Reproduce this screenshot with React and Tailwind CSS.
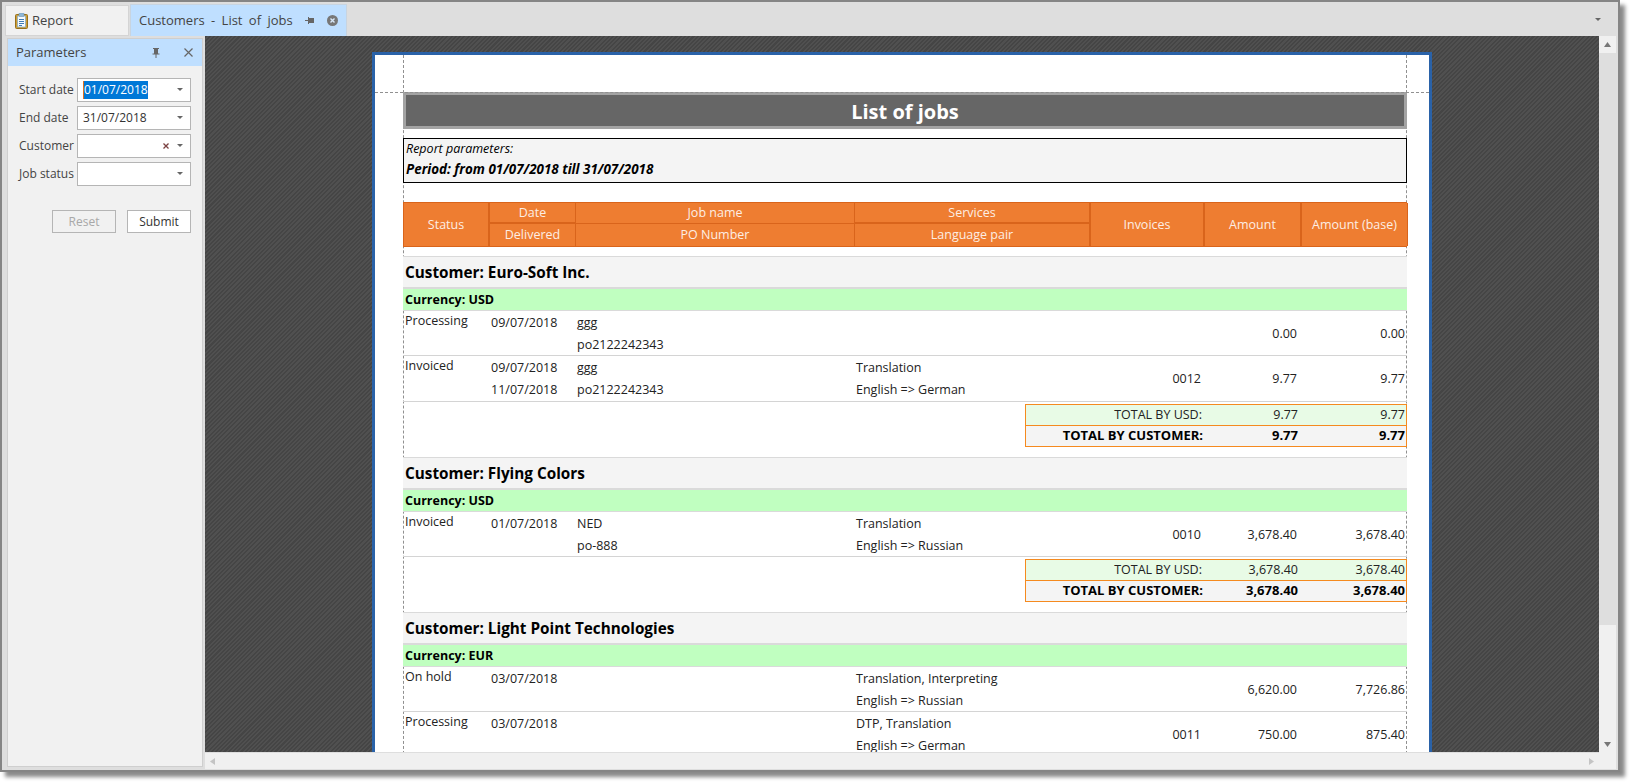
const F = { fontFamily: '"Open Sans", sans-serif' };

function ClipIcon() {
  return (
    <svg width="13" height="16" viewBox="0 0 13 16">
      <rect x="0.5" y="1.5" width="12" height="14" rx="1" fill="#cf9d33" stroke="#96701c" />
      <rect x="2.5" y="3" width="8" height="11" fill="#f6fafd" stroke="#7fa8c8" strokeWidth="0.7" />
      <rect x="4" y="0" width="5" height="3.5" rx="0.5" fill="#8fb8d8" stroke="#6f90aa" strokeWidth="0.5" />
      <path d="M4 6.5h5M4 8.5h5M4 10.5h5M4 12.5h3" stroke="#3f7cb5" strokeWidth="1" />
    </svg>
  );
}
function PinH() {
  return (
    <svg width="9" height="7" viewBox="0 0 9 7"><path d="M0 3.5h3" stroke="#666" /><rect x="3" y="0" width="1" height="7" fill="#666" /><rect x="4" y="1" width="5" height="5" fill="#666" /></svg>
  );
}
function PinV() {
  return (
    <svg width="8" height="10" viewBox="0 0 8 10"><path d="M1 0.5h6M0.5 6h7M4 6v4" stroke="#666" fill="none" /><rect x="2" y="1" width="4" height="5" fill="#666" /></svg>
  );
}
function Caret({ c = "#666" }) {
  return <svg width="6" height="3" viewBox="0 0 6 3"><path d="M0 0h6L3 3z" fill={c} /></svg>;
}
function Field({ label, value, selected, clear }) {
  return (
    <div className="flex items-center h-[23px] mb-[5px]">
      <div className="w-[58px] text-[12px] text-[#444] whitespace-nowrap">{label}</div>
      <div className="w-[114px] h-[24px] border border-[#b5b5b5] bg-white flex items-center pl-[5px] pr-[7px] text-[12px] text-[#333]">
        <span className={selected ? "bg-[#0078d7] text-white border-l border-[#e07020]" : ""}>{value}</span>
        <span className="flex-1" />
        {clear && (
          <svg className="mr-[8px]" width="6" height="6" viewBox="0 0 6 6"><path d="M0.5 0.5l5 5M5.5 0.5l-5 5" stroke="#7a4040" strokeWidth="1.3" /></svg>
        )}
        <Caret />
      </div>
    </div>
  );
}

const COLS = "grid grid-cols-[87px_86px_279px_236px_114px_97px_106px]";
const HCELL = "flex items-center justify-center border-[#d9641b] text-[12.5px] text-[#fdeee4]";

function Head() {
  return (
    <div className={`${COLS} grid-rows-[21px_22px] h-[45px] bg-[#ee7d31] border-y border-[#d9641b] mt-[19px]`}>
      <div className={`${HCELL} row-span-2 border-r-2 border-l pt-[1px]`}>Status</div>
      <div className={`${HCELL} border-r border-b-2 pt-[1px]`}>Date</div>
      <div className={`${HCELL} border-b border-r pt-[1px]`}>Job name</div>
      <div className={`${HCELL} border-b-2 border-r-2 pt-[1px]`}>Services</div>
      <div className={`${HCELL} row-span-2 border-r-2 pt-[1px]`}>Invoices</div>
      <div className={`${HCELL} row-span-2 border-r-2 pt-[1px]`}>Amount</div>
      <div className={`${HCELL} row-span-2 border-r pt-[1px]`}>Amount (base)</div>
      <div className={`${HCELL} border-r`}>Delivered</div>
      <div className={`${HCELL} border-r`}>PO Number</div>
      <div className={`${HCELL} border-r-2`}>Language pair</div>
    </div>
  );
}
function Row({ status, d1, d2, a, b, s, l, inv, am, base, tall }) {
  const c1 = "h-[24px] flex items-center pl-[1px] whitespace-nowrap";
  const c2 = "h-[21px] flex items-center pl-[1px] whitespace-nowrap";
  return (
    <div className={`${COLS} ${tall ? "h-[46px]" : "h-[45px]"} border-b border-[#d4d4d4] text-[12.5px] text-[#222] shrink-0`}>
      <div className="pl-[2px] pt-[1px] leading-[18px]">{status}</div>
      <div><div className={c1}>{d1}</div><div className={c2}>{d2}</div></div>
      <div><div className={c1}>{a}</div><div className={c2}>{b}</div></div>
      <div><div className={c1}>{s}</div><div className={c2}>{l}</div></div>
      <div className="flex items-center justify-end pr-[4px] pt-[1px]">{inv}</div>
      <div className="flex items-center justify-end pr-[5px] pt-[1px]">{am}</div>
      <div className="flex items-center justify-end pr-[3px] pt-[1px]">{base}</div>
    </div>
  );
}
function Group({ name, cur, rows, total, first }) {
  return (
    <div>
      <div className={`${first ? "mt-[9px]" : "mt-[10px]"} h-[33px] pt-[1px] bg-[#f4f4f4] border-t border-b-2 border-[#dadada] flex items-center pl-[2px] text-[15.3px] font-bold text-black`}>Customer: {name}</div>
      <div className="h-[22px] pt-[1px] bg-[#c0ffc0] border-b border-[#dadada] flex items-center pl-[2px] text-[12.5px] font-bold text-black">Currency: {cur}</div>
      {rows.map((r, i) => <Row key={i} {...r} />)}
      {total && (
        <div className="ml-[622px] mt-[2px] h-[43px] border border-[#f58a1f] text-[12.5px] text-[#222]">
          <div className="grid grid-cols-[178px_97px_106px] h-[21px] bg-[#e8fbe6] border-b border-[#f58a1f] items-center text-right">
            <div className="pr-[2px]">TOTAL BY {cur}:</div><div className="pr-[3px]">{total}</div><div className="pr-[2px]">{total}</div>
          </div>
          <div className="grid grid-cols-[178px_97px_106px] h-[20px] bg-[#f4f4f4] items-center text-right font-bold text-[13px] text-black">
            <div className="pr-[1px] whitespace-nowrap">TOTAL BY CUSTOMER:</div><div className="pr-[3px]">{total}</div><div className="pr-[2px]">{total}</div>
          </div>
        </div>
      )}
    </div>
  );
}

export default function App() {
  return (
    <div style={F} className="w-[1630px] h-[783px] bg-white overflow-hidden">
      <div className="w-[1620px] h-[772px] border-2 border-[#858585] shadow-[5px_5px_4px_#8a8a8a] bg-[#dedede] flex flex-col">
        <div className="h-[34px] flex items-end pl-[3px] shrink-0">
          <div className="w-[124px] h-[31px] bg-[#f1f1f1] border border-[#d4d4d4] flex items-center pl-[9px] gap-[4px] text-[13px] text-[#444]">
            <ClipIcon /><span>Report</span>
          </div>
          <div className="ml-[1px] w-[217px] h-[32px] bg-[#bfdfff] border border-[#c8d4e0] border-b-0 flex items-center pl-[8px] text-[13px] text-[#444]">
            <span className="[word-spacing:3px] whitespace-nowrap">Customers - List of jobs</span>
            <span className="ml-[12px] flex"><PinH /></span>
            <svg className="ml-[13px]" width="11" height="11" viewBox="0 0 11 11"><circle cx="5.5" cy="5.5" r="5.5" fill="#777" /><path d="M3.5 3.5l4 4M7.5 3.5l-4 4" stroke="#d8e8f8" strokeWidth="1.4" /></svg>
          </div>
          <div className="flex-1 self-center flex justify-end pr-[17px]"><Caret /></div>
        </div>
        <div className="flex-1 flex min-h-0">
          <div className="w-[203px] shrink-0 pl-[5px] pr-[2px] pt-[2px] pb-[3px]">
            <div className="h-full bg-[#f1f1f1] border border-[#cfcfcf]">
              <div className="h-[27px] bg-[#bfdfff] flex items-center pl-[8px] pr-[9px] text-[13px] text-[#444]">
                <span className="flex-1">Parameters</span>
                <PinV />
                <svg className="ml-[24px]" width="9" height="9" viewBox="0 0 9 9"><path d="M0.5 0.5l8 8M8.5 0.5l-8 8" stroke="#666" strokeWidth="1.2" /></svg>
              </div>
              <div className="pt-[12px] pl-[11px]">
                <Field label="Start date" value="01/07/2018" selected />
                <Field label="End date" value="31/07/2018" />
                <Field label="Customer" value="" clear />
                <Field label="Job status" value="" />
                <div className="flex gap-[11px] mt-[25px] pl-[33px]">
                  <div className="w-[64px] h-[23px] border border-[#b5b5b5] flex items-center justify-center text-[12px] text-[#a8a8a8]">Reset</div>
                  <div className="w-[64px] h-[23px] border border-[#b5b5b5] bg-white flex items-center justify-center text-[12px] text-[#333]">Submit</div>
                </div>
              </div>
            </div>
          </div>
          <div className="flex-1 flex flex-col min-w-0">
            <div className="flex-1 flex min-h-0">
              <div className="w-[1394px] h-[716px] overflow-hidden pt-[16px] pl-[167px] bg-[#4a4a4a] bg-[repeating-linear-gradient(135deg,#454545_0px,#454545_1.5px,#505050_1.5px,#505050_3px)]">
                <div className="relative w-[1060px] h-[720px] bg-white border-[3px] border-[#2a62a8] pl-[28px] pr-[22px]">
                  <div className="absolute left-[28px] top-0 bottom-0 border-l border-dashed border-[#909090]" />
                  <div className="absolute right-[22px] top-0 bottom-0 border-l border-dashed border-[#909090]" />
                  <div className="absolute left-0 right-0 top-[37px] border-t border-dashed border-[#909090] z-10" />
                  <div className="pt-[37px] relative">
                    <div className="h-[37px] pt-[2px] bg-[#666] border-[3px] border-[#a3a3a3] flex items-center justify-center text-[20px] font-bold text-white">List of jobs</div>
                    <div className="mt-[9px] h-[45px] bg-[#f4f4f4] border border-black pl-[2px] text-black italic">
                      <div className="h-[20px] flex items-center text-[12.5px]">Report parameters:</div>
                      <div className="h-[21px] flex items-center font-bold text-[13.4px]">Period: from 01/07/2018 till 31/07/2018</div>
                    </div>
                    <Head />
                    <Group first name="Euro-Soft Inc." cur="USD" total="9.77" rows={[
                      { status: "Processing", d1: "09/07/2018", a: "ggg", b: "po2122242343", am: "0.00", base: "0.00" },
                      { tall: true, status: "Invoiced", d1: "09/07/2018", d2: "11/07/2018", a: "ggg", b: "po2122242343", s: "Translation", l: "English => German", inv: "0012", am: "9.77", base: "9.77" },
                    ]} />
                    <Group name="Flying Colors" cur="USD" total="3,678.40" rows={[
                      { status: "Invoiced", d1: "01/07/2018", a: "NED", b: "po-888", s: "Translation", l: "English => Russian", inv: "0010", am: "3,678.40", base: "3,678.40" },
                    ]} />
                    <Group name="Light Point Technologies" cur="EUR" rows={[
                      { status: "On hold", d1: "03/07/2018", s: "Translation, Interpreting", l: "English => Russian", am: "6,620.00", base: "7,726.86" },
                      { status: "Processing", d1: "03/07/2018", s: "DTP, Translation", l: "English => German", inv: "0011", am: "750.00", base: "875.40" },
                    ]} />
                  </div>
                </div>
              </div>
              <div className="w-[17px] flex flex-col bg-[#f0f0f0]">
                <div className="h-[17px] flex items-center justify-center"><svg width="7" height="5" viewBox="0 0 7 5"><path d="M0 5h7L3.5 0z" fill="#777" /></svg></div>
                <div className="h-[572px] bg-[#dedede]" />
                <div className="flex-1" />
                <div className="h-[17px] flex items-center justify-center"><svg width="7" height="5" viewBox="0 0 7 5"><path d="M0 0h7L3.5 5z" fill="#777" /></svg></div>
              </div>
            </div>
            <div className="h-[17px] w-[1411px] bg-[#f0f0f0] border-b border-[#dedede] flex items-center justify-between pl-[5px] pr-[22px]">
              <svg width="5" height="7" viewBox="0 0 5 7"><path d="M5 0v7L0 3.5z" fill="#c4c4c4" /></svg>
              <svg width="5" height="7" viewBox="0 0 5 7"><path d="M0 0v7l5-3.5z" fill="#c4c4c4" /></svg>
            </div>
          </div>
        </div>
      </div>
    </div>
  );
}
